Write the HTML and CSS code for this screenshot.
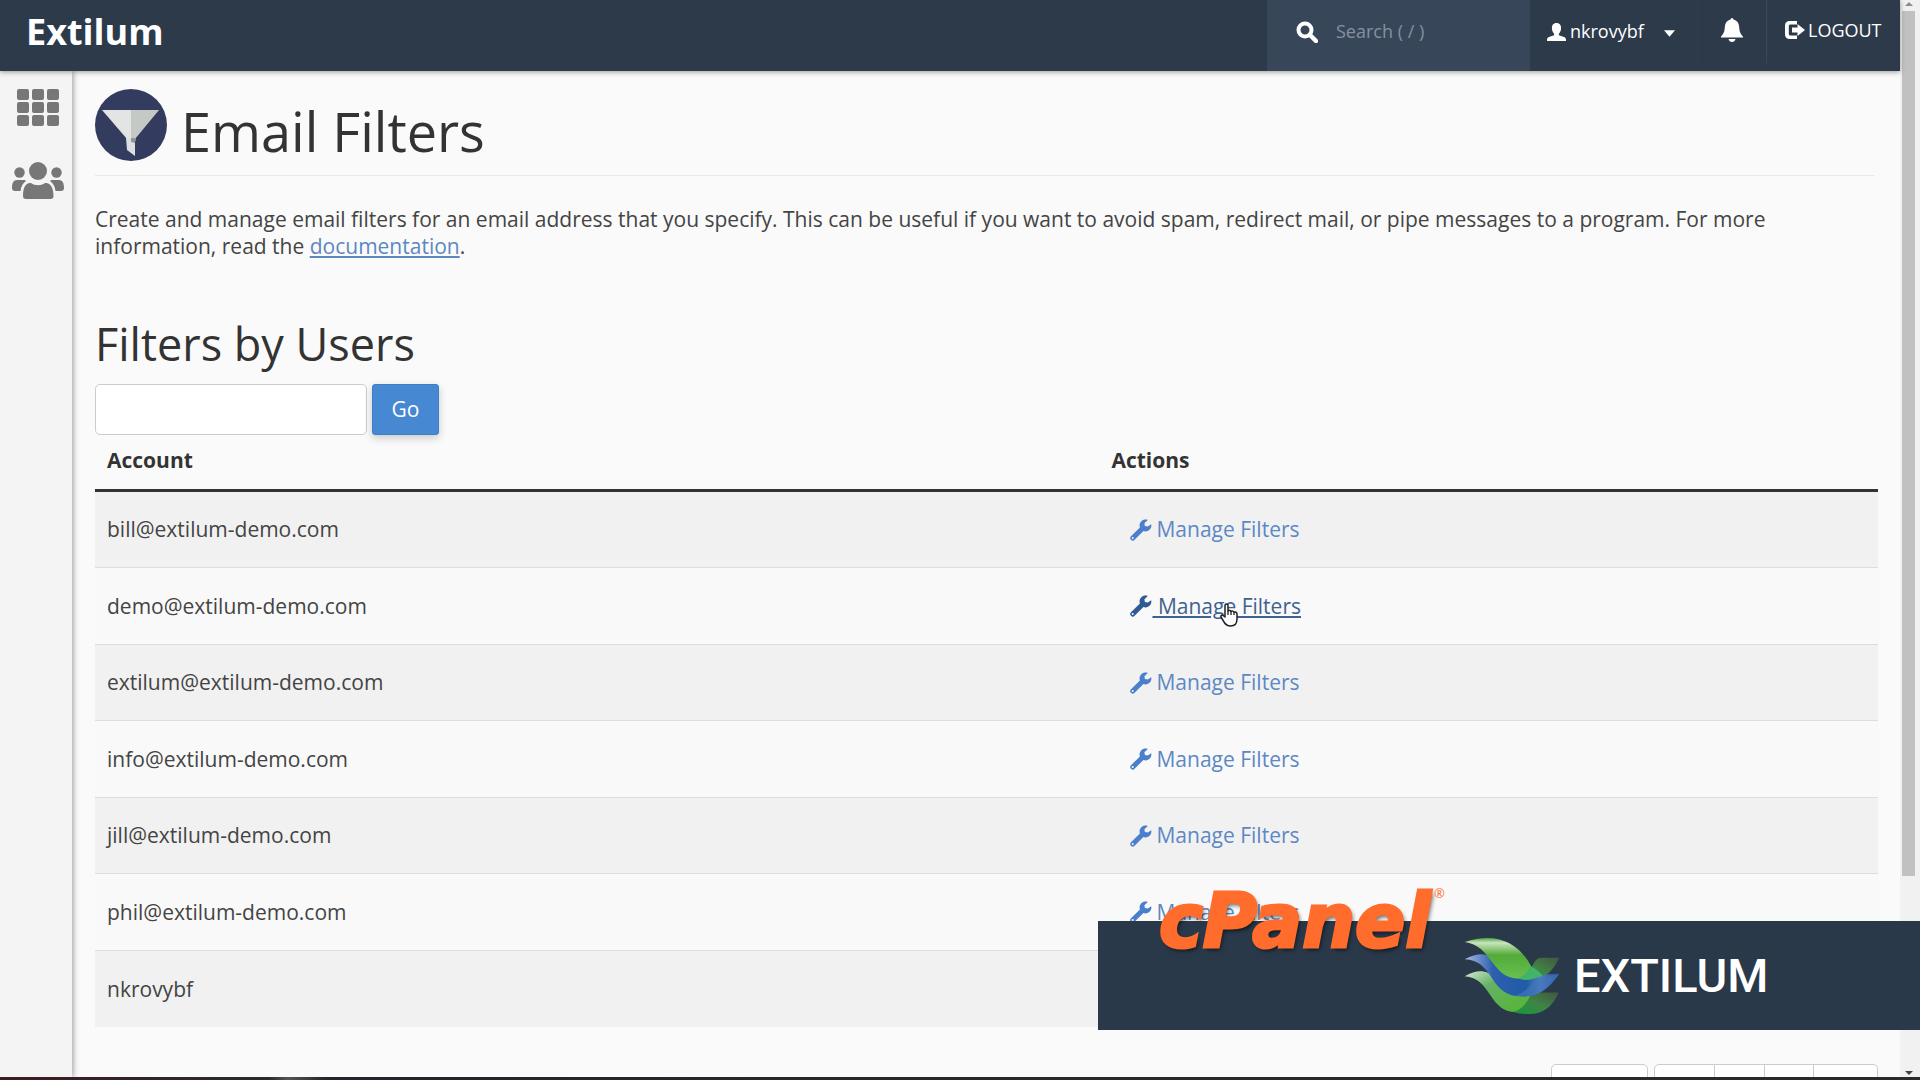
FILE: index.html
```html
<!DOCTYPE html>
<html lang="en">
<head>
<meta charset="utf-8">
<title>Email Filters</title>
<link rel="stylesheet" href="styles.css">
</head>
<body>
<svg class="sprite" aria-hidden="true">
  <symbol id="wrench" viewBox="0 0 22 22">
    <path fill-rule="evenodd" d="M21.2 5.2c.9 3.600-1.800 7.200-5.400 7.300-1 0-1.700-.2-2.400-.5L4.600 20.800a2.500 2.500 0 0 1-3.600-3.600L9.900 8.500C8.500 4.400 11.700.4 15.600.5c.9 0 1.600.2 2.200.4l-3.400 3.300.5 2.700 2.900.6zM2.700 18a1 1 0 1 0 0 2 1 1 0 0 0 0-2z"/>
  </symbol>
</svg>
<div class="screen">
  <div class="window">
    <div class="app">
      <header class="topbar">
        <a class="brand" href="#">Extilum</a>
        <div class="search">
          <svg class="search-icon" viewBox="0 0 22 22" aria-hidden="true"><circle cx="9" cy="9" r="6.500" fill="none" stroke="currentColor" stroke-width="4"/><path d="M14 14l6 6" stroke="currentColor" stroke-width="4.500" stroke-linecap="round"/></svg>
          <input type="search" aria-label="Search" placeholder="Search ( / )">
        </div>
        <button class="user" type="button">
          <svg class="user-icon" viewBox="0 0 20 19" aria-hidden="true"><path fill="currentColor" d="M10 0c3.500 0 5 2.500 4.800 5.800-.2 2.500-1 4.200-2.300 5.600v1.400l5.500 2c1.300.6 2 1.500 2 3V19H0v-1.200c0-1.500.7-2.400 2-3l5.500-2v-1.400C6.200 10 5.400 8.300 5.200 5.800 5 2.500 6.500 0 10 0z"/></svg>
          <span>nkrovybf</span>
          <svg class="caret" viewBox="0 0 12 7" aria-hidden="true"><path fill="currentColor" d="M0 0h12L6 7z"/></svg>
        </button>
        <button class="bell" type="button" aria-label="Notifications">
          <svg viewBox="0 0 22 24" aria-hidden="true"><path fill="currentColor" d="M9.500 1.500a1.500 1.500 0 0 1 3 0C16 2.300 18 5 18.200 9c.2 4.500 1 6.500 3.800 9.500v1H0v-1C2.800 15.500 3.600 13.500 3.800 9 4 5 6 2.300 9.500 1.500zM7.500 21h7c-.4 2-1.800 3-3.500 3s-3.100-1-3.500-3z"/></svg>
        </button>
        <a class="logout" href="#">
          <svg viewBox="0 0 20 18" aria-hidden="true"><path fill="currentColor" d="M12 0v3.500H6C4.200 3.500 3.800 4 3.800 6v6c0 2 .4 2.500 2.200 2.500h6V18H5.500C1.500 18 0 16.500 0 12.500v-7C0 1.500 1.500 0 5.500 0zM12.500 3l7.500 6-7.500 6v-3.500H7v-5h5.500z"/></svg>
          <span>LOGOUT</span>
        </a>
      </header>
      <div class="body">
        <nav class="sidebar" aria-label="Main">
          <a href="#" aria-label="Tools">
            <svg class="grid-icon" viewBox="0 0 42 37" aria-hidden="true"><g fill="currentColor"><rect width="12" height="11" rx="2"/><rect x="15" width="12" height="11" rx="2"/><rect x="30" width="12" height="11" rx="2"/><rect y="13" width="12" height="11" rx="2"/><rect x="15" y="13" width="12" height="11" rx="2"/><rect x="30" y="13" width="12" height="11" rx="2"/><rect y="26" width="12" height="11" rx="2"/><rect x="15" y="26" width="12" height="11" rx="2"/><rect x="30" y="26" width="12" height="11" rx="2"/></g></svg>
          </a>
          <a href="#" aria-label="User Manager">
            <svg class="users-icon" viewBox="0 0 52 37" aria-hidden="true"><g fill="currentColor"><circle cx="26" cy="9" r="9"/><circle cx="7.500" cy="10.500" r="5.200"/><circle cx="44.500" cy="10.500" r="5.200"/><path d="M14 37c-2 0-3-1-3-3 0-8 2.500-13 7-13h1c4 3 10 3 14 0h1c4.500 0 7.500 5 7.500 13 0 2-1 3-3 3zM3 29c-2 0-3-1-3-3 0-5 1.500-8 5-8h7c1 0 1.500.5 2 1-3 2-5 5.500-5.500 10zM49 29c2 0 3-1 3-3 0-5-1.500-8-5-8h-7c-1 0-1.500.5-2 1 3 2 5 5.500 5.500 10z"/></g></svg>
          </a>
        </nav>
        <main class="content">
          <h1>
            <svg class="filter-icon" viewBox="0 0 72 72" aria-hidden="true"><circle cx="36" cy="36" r="36" fill="#333c5e"/><path d="M7 21h29v29h-4z" fill="#e2e5e4"/><path d="M36 21h28L40 50h-4z" fill="#c5c9c6"/><path d="M31 49h10l-1 3v15l-8-6z" fill="#dadfe2"/><path d="M36 49h5l-1 5-4-1z" fill="#8f9696"/></svg>
            <span>Email Filters</span>
          </h1>
          <p class="intro">Create and manage email filters for an email address that you specify. This can be useful if you want to avoid spam, redirect mail, or pipe messages to a program. For more information, read the <a href="#">documentation</a>.</p>
          <h2>Filters by Users</h2>
          <form class="finder">
            <input type="text" aria-label="Search accounts">
            <button type="button">Go</button>
          </form>
          <table class="accounts">
            <thead><tr><th scope="col">Account</th><th scope="col">Actions</th></tr></thead>
            <tbody>
              <tr><td>bill@extilum-demo.com</td><td><a class="manage" href="#"><svg aria-hidden="true"><use href="#wrench"/></svg><span>Manage Filters</span></a></td></tr>
              <tr><td>demo@extilum-demo.com</td><td><a class="manage active" href="#"><svg aria-hidden="true"><use href="#wrench"/></svg><span>&nbsp;Manage Filters</span><svg class="pointer" viewBox="0 0 18 24" aria-hidden="true"><path fill="#fff" stroke="#222" stroke-width="1.500" stroke-linejoin="round" d="M5 14V2.500a1.500 1.500 0 0 1 3 0V8c1-1 2.700-.8 3 .5 1-.8 2.500-.5 3 .8 1.300-.6 3 0 3 1.700v5c0 4-2 7-6.500 7-3.500 0-5-1.500-6.500-4L1 14c-.6-1.500 1-2.500 2-1.500z"/><path d="M8 8v4M11 8.500V12M14 9.500V12" stroke="#222" stroke-width="1.300"/></svg></a></td></tr>
              <tr><td>extilum@extilum-demo.com</td><td><a class="manage" href="#"><svg aria-hidden="true"><use href="#wrench"/></svg><span>Manage Filters</span></a></td></tr>
              <tr><td>info@extilum-demo.com</td><td><a class="manage" href="#"><svg aria-hidden="true"><use href="#wrench"/></svg><span>Manage Filters</span></a></td></tr>
              <tr><td>jill@extilum-demo.com</td><td><a class="manage" href="#"><svg aria-hidden="true"><use href="#wrench"/></svg><span>Manage Filters</span></a></td></tr>
              <tr><td>phil@extilum-demo.com</td><td><a class="manage" href="#"><svg aria-hidden="true"><use href="#wrench"/></svg><span>Manage Filters</span></a></td></tr>
              <tr><td>nkrovybf</td><td></td></tr>
            </tbody>
          </table>
          <div class="pager">
            <button class="size" type="button" aria-label="Page size"></button>
            <div class="pages">
              <button type="button" aria-label="First page"></button>
              <button type="button" aria-label="Previous page"></button>
              <button type="button" aria-label="Next page"></button>
              <button type="button" aria-label="Last page"></button>
            </div>
          </div>
        </main>
      </div>
    </div>
    <div class="scrollbar" aria-hidden="true">
      <svg viewBox="0 0 8 4"><path d="M0 4h8L4 0z" fill="#8b8b8b"/></svg>
      <div class="track"><div class="thumb"></div></div>
      <svg viewBox="0 0 8 4"><path d="M0 0h8L4 4z" fill="#444"/></svg>
    </div>
  </div>
  <div class="taskbar"></div>
  <aside class="banner">
    <div class="cpanel">cPanel<sup>®</sup></div>
    <div class="extilum">
      <svg viewBox="132 230 290 235" aria-hidden="true">
        <defs>
          <linearGradient id="g1" x1="0" y1="0" x2="0" y2="1"><stop offset="0" stop-color="#4fa044"/><stop offset=".12" stop-color="#c9e5bf"/><stop offset=".42" stop-color="#52ab38"/><stop offset="1" stop-color="#69c052"/></linearGradient>
          <linearGradient id="b1" x1="0" y1="0" x2="1" y2="0"><stop offset="0" stop-color="#a9bce6"/><stop offset=".3" stop-color="#2d5fad"/><stop offset=".65" stop-color="#1f5ba8"/><stop offset=".8" stop-color="#527fbf"/><stop offset="1" stop-color="#24488e"/></linearGradient>
          <linearGradient id="g2" x1="0" y1="0" x2="1" y2="1"><stop offset="0" stop-color="#d6ead6"/><stop offset=".35" stop-color="#65b167"/><stop offset="1" stop-color="#56b52f"/></linearGradient>
          <linearGradient id="d1" x1="0" y1="1" x2="1" y2="0"><stop offset="0" stop-color="#159a3c"/><stop offset=".5" stop-color="#3f8445"/><stop offset="1" stop-color="#435541"/></linearGradient>
        </defs>
        <path d="M280 456Q315 440 332 403L360 397H418Q390 462 330 462Q305 463 280 456Z" fill="url(#d1)"/>
        <path d="M134 348C175 325 205 330 225 355C250 385 275 408 332 407Q312 450 278 456C204 444 214 355 134 348Z" fill="url(#g2)"/>
        <path d="M298 356Q325 345 345 305Q352 292 368 292H420Q388 360 330 361Z" fill="url(#d1)"/>
        <path d="M134 297C170 278 195 278 212 290C240 345 305 378 362 347Q382 340 420 341C380 398 346 415 288 408C208 396 220 300 134 297Z" fill="url(#b1)"/>
        <path d="M288 407Q322 396 342 361Q382 350 420 341C380 398 346 415 288 407Z" fill="#4277bb" opacity=".65"/>
        <path d="M134 245C235 210 300 252 335 318C326 338 310 352 293 356C214 350 215 255 134 245Z" fill="url(#g1)"/>
        <path d="M335 318Q358 332 369 345Q330 366 294 356Q320 345 335 318Z" fill="#41b36a"/>
      </svg>
      <span>EXTILUM</span>
    </div>
  </aside>
</div>
</body>
</html>
```
FILE: styles.css
```css
* { box-sizing: border-box; }

body {
  margin: 0;
  background: #fafafa;
  color: #444;
  font-family: "Open Sans", "Noto Sans", sans-serif;
  font-size: 21px;
  line-height: 27px;
}

button, input { font: inherit; }
.sprite { display: none; }

.screen {
  position: relative;
  display: flex;
  flex-direction: column;
  height: 100vh;
  overflow: hidden;
}
.window { flex: 1; min-height: 0; display: flex; overflow: hidden; }
.app { flex: 1; min-width: 0; display: flex; flex-direction: column; }
.taskbar { height: 3px; background: linear-gradient(90deg, #3b1c20, #2b2b2b 14%, #555 15%, #22252b 17%, #2b2b2b); }

/* Top bar */
.topbar {
  position: relative;
  z-index: 2;
  flex: none;
  display: flex;
  height: 71px;
  padding-bottom: 8px;
  background: #2c3a4a;
  box-shadow: 0 1px 5px #0006;
  color: #fff;
  font-size: 18px;
}
.topbar button { padding: 0; border: 0; background: none; color: inherit; }
.brand {
  flex: 1;
  display: flex;
  align-items: center;
  padding-left: 26px;
  color: #fff;
  font-size: 36px;
  font-weight: 700;
  text-decoration: none;
}
.search {
  display: flex;
  align-items: center;
  gap: 18px;
  width: 263px;
  margin-bottom: -8px;
  padding: 0 10px 8px 29px;
  background: #384659;
}
.search-icon { flex: none; width: 22px; height: 22px; }
.search input { width: 100%; min-width: 0; padding: 0; border: 0; outline: 0; background: none; color: #fff; }
.search input::placeholder { color: #8590a0; opacity: 1; }
.topbar .user { display: flex; align-items: center; width: 168px; padding-left: 17px; border-right: 1px solid #303f50; }
.user-icon { width: 19px; height: 18px; margin-right: 4px; }
.caret { width: 11px; height: 7px; margin: 3px 0 0 20px; }
.topbar .bell { display: flex; align-items: center; justify-content: center; width: 69px; border-right: 1px solid #3a495a; }
.bell svg { width: 22px; height: 24px; margin-bottom: 4px; }
.logout { display: flex; align-items: center; gap: 3px; width: 133px; padding: 0 0 3px 18px; color: #fff; text-decoration: none; }
.logout svg { width: 20px; height: 18px; }

/* Side navigation and page body */
.body { flex: 1; min-height: 0; display: flex; }
.sidebar {
  flex: none;
  display: flex;
  flex-direction: column;
  align-items: center;
  gap: 36px;
  width: 72px;
  padding: 18px 0 0 4px;
  background: #f4f4f4;
  box-shadow: 1px 0 6px #0006;
}
.sidebar a { display: flex; color: #777; }
.grid-icon { width: 42px; height: 37px; }
.users-icon { width: 52px; height: 37px; }
.content { flex: 1; min-width: 0; padding: 18px 22px 0 23px; }

h1, h2 { margin: 0; color: #333; font-weight: 400; }
h1 {
  display: flex;
  gap: 14px;
  height: 87px;
  margin-right: 4px;
  border-bottom: 1px solid #e8e8e8;
  font-size: 54px;
  line-height: 84px;
}
.filter-icon { flex: none; width: 72px; height: 72px; }
.intro { margin: 30px 0 0; }
.intro a { color: #5c88bf; }
h2 { margin-top: 44px; font-size: 45px; line-height: 80px; }

.finder { display: flex; gap: 5px; }
.finder input { width: 272px; height: 51px; border: 1px solid #ccc; border-radius: 5px; background: #fff; }
.finder button {
  width: 67px;
  height: 51px;
  border: 1px solid #3f7fc8;
  border-radius: 3px;
  background: #4788d3;
  box-shadow: 0 3px 8px #0003;
  color: #fff;
}

/* Accounts table */
.accounts { width: 100%; border-collapse: separate; border-spacing: 0; table-layout: fixed; }
.accounts th { height: 57px; padding: 0 12px 3px; border-bottom: 3px solid #333; color: #333; font-weight: 700; text-align: left; }
.accounts th:first-child { width: 56%; }
.accounts td { height: 76px; padding: 0 12px; border-bottom: 1px solid #ddd; }
.accounts th:last-child, .accounts td:last-child { padding-left: 18px; }
.accounts tr:nth-child(even) td { height: 77px; background: #f9f9f9; }
.accounts tbody tr:nth-child(odd) td { background: #f1f1f1; }
.accounts tbody tr:last-child td { border-bottom: 0; }
.manage { position: relative; display: flex; width: fit-content; align-items: center; gap: 4px; margin-left: 19px; color: #5c88c4; text-decoration: none; }
.manage svg { width: 22px; height: 22px; fill: #4a80cb; }
.manage.active { gap: 0; color: #40628f; }
.manage.active span { text-decoration: underline; }
.manage.active svg { fill: #2f5b93; }
.manage .pointer { position: absolute; left: 90px; top: 10px; width: 18px; height: 24px; }

.pager { display: flex; justify-content: flex-end; gap: 6px; margin-top: 37px; }
.pager button { height: 51px; border: 1px solid #ccc; background: #fff; }
.pager .size { width: 97px; border-radius: 5px; }
.pages { display: grid; grid-template-columns: 61px 50px 49px 64px; }
.pages button + button { border-left: 0; }
.pages button:first-child { border-radius: 5px 0 0 5px; }
.pages button:last-child { border-radius: 0 5px 5px 0; }

/* Window scroll bar */
.scrollbar { display: flex; flex-direction: column; align-items: center; width: 20px; padding: 2px 3px 2px 0; background: #f1f1f1; }
.scrollbar svg { flex: none; width: 8px; height: 4px; }
.track { flex: 1; width: 13px; margin: 5px 0; }
.thumb { height: 82%; background: #c1c1c1; }

/* Banner over the lower corner of the page */
.banner { position: absolute; z-index: 3; right: 0; bottom: 50px; width: 822px; height: 109px; background: #2a3949; }
.cpanel {
  position: absolute;
  left: 61px;
  top: -40px;
  color: #ff6c2c;
  font: italic 700 74px/80px "DejaVu Sans", sans-serif;
  -webkit-text-stroke: 3px #ff6c2c;
  text-shadow: 2px 3px 4px #0009;
}
.cpanel sup { position: absolute; left: 275px; top: 5px; font: 400 13px/14px "Open Sans", sans-serif; -webkit-text-stroke: 0; text-shadow: none; }
.extilum { display: flex; align-items: center; gap: 14px; height: 100%; padding-left: 366px; color: #fff; font: 500 47px/60px Roboto, sans-serif; }
.extilum svg { width: 96px; height: 78px; }
```
